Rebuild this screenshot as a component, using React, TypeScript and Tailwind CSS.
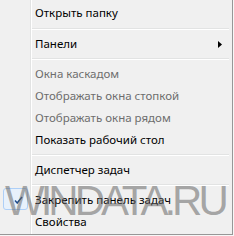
import React from "react";

type Item = { label: string; disabled?: boolean; submenu?: boolean; checked?: boolean };

const Row = ({ item }: { item: Item }) => (
  <div className="relative flex h-[22px] items-center">
    <div className="relative flex h-full w-[30px] shrink-0 items-center">
      {item.checked && (
        <div className="absolute left-[3px] top-[-1px] flex h-[22px] w-[25px] items-center justify-center rounded-[3px] border border-[#aecff7] bg-[#e8f1fb]">
          <svg width="9" height="8" viewBox="0 0 9 8" className="ml-[6px] mt-[1px]">
            <path d="M1 4.5 L3.2 7 L8 1" fill="none" stroke="#1d4a8c" strokeWidth="1.5" />
          </svg>
        </div>
      )}
    </div>
    <div className="h-full w-px shrink-0 bg-[#e2e3e3]" />
    <div className="h-full w-px shrink-0 bg-white" />
    <span
      className={`ml-[3px] whitespace-nowrap text-[11.5px] leading-none ${item.disabled ? "text-[#6d6d6d]" : "text-black"}`}
      style={{ fontFamily: '"Noto Sans", "Open Sans", sans-serif' }}
    >
      {item.label}
    </span>
    {item.submenu && (
      <svg width="5" height="7" viewBox="0 0 5 7" className="absolute left-[218px] top-[8px]">
        <path d="M0 0 L4 3.5 L0 7 Z" fill="#000" />
      </svg>
    )}
  </div>
);

const Sep = ({ h }: { h: string }) => (
  <div className={`flex ${h} items-stretch`}>
    <div className="w-[30px] shrink-0" />
    <div className="w-px shrink-0 bg-[#e2e3e3]" />
    <div className="w-px shrink-0 bg-white" />
    <div className="flex flex-1 flex-col justify-center pr-[3px]">
      <div className="h-px bg-[#e2e3e3]" />
      <div className="h-px bg-white" />
    </div>
  </div>
);

export default function App() {
  return (
    <div className="relative h-[236px] w-[234px] overflow-hidden bg-[#f7f7f7]">
      <div className="flex h-[235px] w-[233px] flex-col border-b border-r border-[#979797] bg-[#f0f0f0]">
        <div className="flex h-[2px]">
          <div className="w-[30px] shrink-0" />
          <div className="w-px shrink-0 bg-[#e2e3e3]" />
          <div className="w-px shrink-0 bg-white" />
        </div>
        <Row item={{ label: "Открыть папку" }} />
        <Sep h="h-[9px]" />
        <Row item={{ label: "Панели", submenu: true }} />
        <Sep h="h-[8px]" />
        <Row item={{ label: "Окна каскадом", disabled: true }} />
        <Row item={{ label: "Отображать окна стопкой", disabled: true }} />
        <Row item={{ label: "Отображать окна рядом", disabled: true }} />
        <Row item={{ label: "Показать рабочий стол" }} />
        <Sep h="h-[8px]" />
        <Row item={{ label: "Диспетчер задач" }} />
        <Sep h="h-[8px]" />
        <Row item={{ label: "Закрепить панель задач", checked: true }} />
        <Row item={{ label: "Свойства" }} />
        <div className="flex flex-1">
          <div className="w-[30px] shrink-0" />
          <div className="w-px shrink-0 bg-[#e2e3e3]" />
          <div className="w-px shrink-0 bg-white" />
        </div>
      </div>
      <div
        className="pointer-events-none absolute left-[5px] top-[180px] whitespace-nowrap text-[42px] leading-none tracking-[-4px] text-[rgba(100,100,100,0.55)]"
        style={{ fontFamily: '"Liberation Sans", sans-serif' }}
      >
        WINDATA.RU
      </div>
    </div>
  );
}
